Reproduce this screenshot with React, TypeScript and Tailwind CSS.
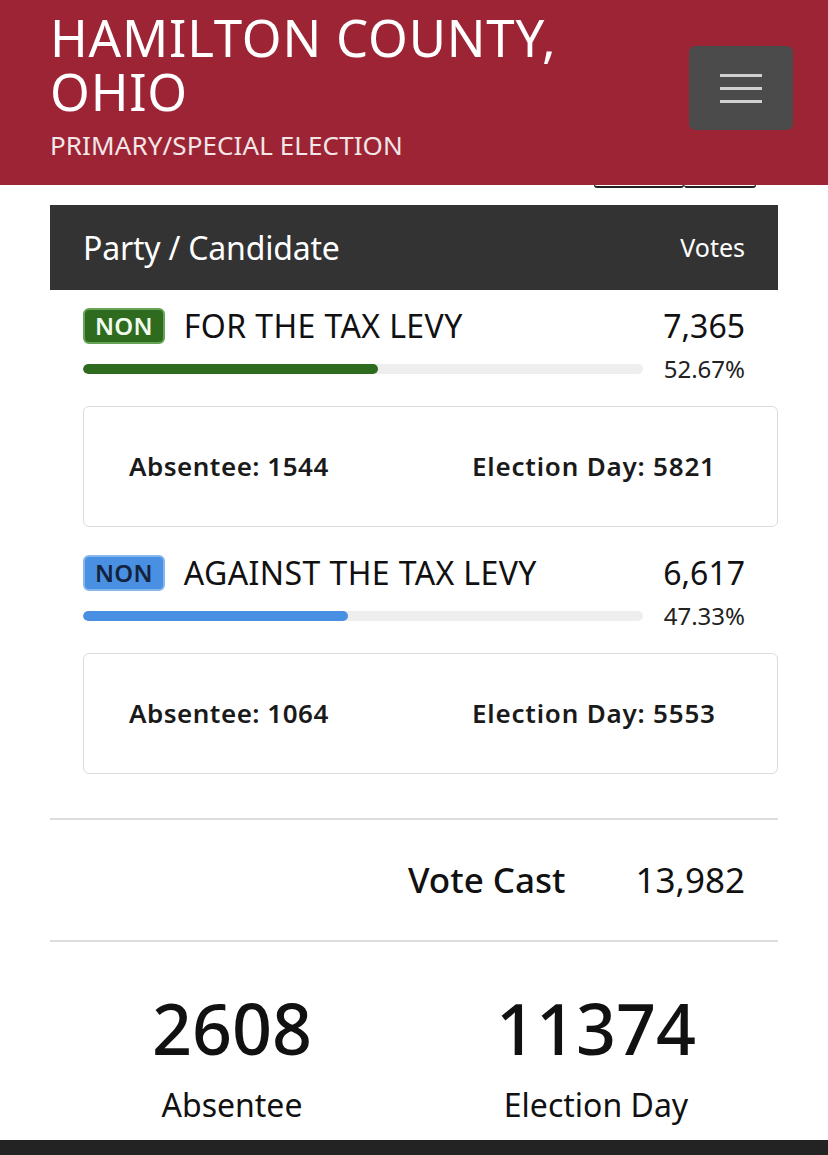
export default function App() {
  const font = { fontFamily: '"Noto Sans", "Open Sans", sans-serif' };
  const rows = [
    { name: "FOR THE TAX LEVY", votes: "7,365", pct: 52.67, color: "bg-[#2e6b1f]", badge: "bg-[#2e6b1f] text-[#f2fbef] border-[#66a455]", abs: 1544, day: 5821, pt: "pt-[16px]" },
    { name: "AGAINST THE TAX LEVY", votes: "6,617", pct: 47.33, color: "bg-[#4a90e2]", badge: "bg-[#4a90e2] text-[#14233d] border-[#86b6ee]", abs: 1064, day: 5553, pt: "pt-[26px]" },
  ];

  return (
    <div className="w-[828px] h-[1155px] bg-white overflow-hidden flex flex-col text-[#111]" style={font}>
      {/* Header */}
      <div className="h-[185px] bg-[#9d2434] flex justify-between shrink-0 relative">
        <div className="pl-[50px] pt-[10px] text-white">
          <h1 className="text-[51px] leading-[54px] font-normal tracking-[0.8px]">HAMILTON COUNTY,<br />OHIO</h1>
          <p className="text-[26px] leading-[30px] mt-[12px] text-[#f3e6e8] tracking-[0.1px]">PRIMARY/SPECIAL ELECTION</p>
        </div>
        <div className="mr-[35px] mt-[46px] w-[104px] h-[84px] bg-[#4b4b4b] rounded-[6px] flex flex-col items-center justify-center gap-[10px]">
          <span className="block w-[42px] h-[3px] bg-[#d0d0d0]" />
          <span className="block w-[42px] h-[3px] bg-[#d0d0d0]" />
          <span className="block w-[42px] h-[3px] bg-[#d0d0d0]" />
        </div>
        <div className="absolute left-[594px] top-[185px] flex">
          <span className="block w-[90px] h-[3px] border-b-2 border-x border-[#222] rounded-b-[3px]" />
          <span className="block w-[72px] h-[3px] border-b-2 border-r border-[#222] rounded-b-[3px]" />
        </div>
      </div>

      <div className="px-[50px] pt-[20px]">
        {/* Table header */}
        <div className="h-[85px] bg-[#333333] flex items-center justify-between pl-[33px] pr-[33px] text-white">
          <span className="text-[32px] tracking-[-0.2px]">Party / Candidate</span>
          <span className="text-[25px]">Votes</span>
        </div>

        {rows.map((r) => (
          <div key={r.name} className={`pl-[33px] ${r.pt}`}>
            <div className="flex items-center justify-between pr-[33px]">
              <div className="flex items-center gap-[19px]">
                <span className={`${r.badge} border-2 text-[24px] leading-[32px] font-semibold px-[10px] rounded-[6px] tracking-[0.3px]`}>NON</span>
                <span className="text-[32px] leading-[40px] tracking-[0.4px]">{r.name}</span>
              </div>
              <span className="text-[32px] leading-[40px]">{r.votes}</span>
            </div>
            <div className="flex items-center justify-between pr-[33px] mt-[6px]">
              <div className="w-[560px] h-[10px] bg-[#eeeeee] rounded-full overflow-hidden">
                <div className={`h-full ${r.color} rounded-full`} style={{ width: `${r.pct}%` }} />
              </div>
              <span className="text-[24px] leading-[33px] text-[#222]">{r.pct.toFixed(2)}%</span>
            </div>
            <div className="mt-[21px] h-[121px] border border-[#dcdcdc] rounded-[6px] flex items-center pl-[45px] text-[26px] font-semibold text-[#1a1a1a]">
              <span className="w-[343px] tracking-[0.5px]">Absentee: {r.abs}</span>
              <span className="tracking-[0.8px]">Election Day: {r.day}</span>
            </div>
          </div>
        ))}

        <div className="mt-[44px] border-t-2 border-[#dddddd] h-[122px] flex items-center justify-end pr-[33px] gap-[70px]">
          <span className="text-[35px] font-medium">Vote Cast</span>
          <span className="text-[35px]">13,982</span>
        </div>
        <div className="border-t-2 border-[#dddddd] flex pt-[41px]">
          <div className="w-[364px] flex flex-col items-center">
            <span className="text-[70px] leading-[90px] font-medium">2608</span>
            <span className="text-[32px] mt-[8px]">Absentee</span>
          </div>
          <div className="w-[364px] flex flex-col items-center">
            <span className="text-[70px] leading-[90px] font-medium">11374</span>
            <span className="text-[32px] mt-[8px]">Election Day</span>
          </div>
        </div>
      </div>
      <div className="mt-auto h-[15px] bg-[#232323]" />
    </div>
  );
}
